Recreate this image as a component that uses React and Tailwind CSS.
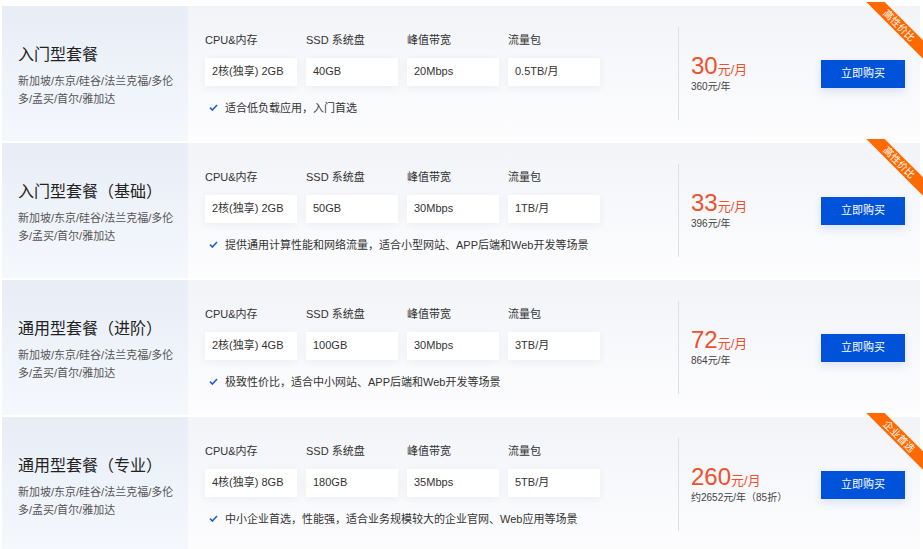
const plans = [
  {
    name: '入门型套餐',
    specs: ['2核(独享) 2GB', '40GB', '20Mbps', '0.5TB/月'],
    note: '适合低负载应用，入门首选',
    price: '30',
    year: '360元/年',
    tag: '高性价比',
  },
  {
    name: '入门型套餐（基础）',
    specs: ['2核(独享) 2GB', '50GB', '30Mbps', '1TB/月'],
    note: '提供通用计算性能和网络流量，适合小型网站、APP后端和Web开发等场景',
    price: '33',
    year: '396元/年',
    tag: '高性价比',
  },
  {
    name: '通用型套餐（进阶）',
    specs: ['2核(独享) 4GB', '100GB', '30Mbps', '3TB/月'],
    note: '极致性价比，适合中小网站、APP后端和Web开发等场景',
    price: '72',
    year: '864元/年',
  },
  {
    name: '通用型套餐（专业）',
    specs: ['4核(独享) 8GB', '180GB', '35Mbps', '5TB/月'],
    note: '中小企业首选，性能强，适合业务规模较大的企业官网、Web应用等场景',
    price: '260',
    year: '约2652元/年（85折）',
    tag: '企业首选',
  },
]

const labels = ['CPU&内存', 'SSD 系统盘', '峰值带宽', '流量包']

const Check = () => (
  <svg width="9" height="7" viewBox="0 0 9 7" className="shrink-0">
    <path d="M1 3.6 L3.4 6 L8 1" fill="none" stroke="#1a5fd8" strokeWidth="1.6" />
  </svg>
)

const PlanCard = ({ plan }) => (
  <div className="relative flex h-[135px] w-[918px] ml-[2px] bg-gradient-to-b from-[#f2f4f8] to-[#fdfdfe]">
    {/* Left: name + regions */}
    <div className="flex w-[186px] shrink-0 flex-col justify-center pl-[16px] pt-[4px] bg-gradient-to-b from-[#e8edf6] to-[#f5f8fd]">
      <div className="text-[16px] leading-[22px] text-[#222]">{plan.name}</div>
      <div className="mt-[6px] text-[11px] leading-[18px] text-[#555]">
        新加坡/东京/硅谷/法兰克福/多伦
        <br />
        多/孟买/首尔/雅加达
      </div>
    </div>

    {/* Middle: specs */}
    <div className="flex w-[490px] shrink-0 flex-col justify-center pl-[17px]">
      <div className="flex gap-[9px]">
        {labels.map((l, i) => (
          <div key={l} className="w-[92px]">
            <div className="text-[11px] leading-[16px] text-[#333]">{l}</div>
            <div className="mt-[10px] flex h-[28px] items-center bg-white pl-[7px] text-[11px] text-[#333] shadow-[0_2px_8px_rgba(30,50,90,0.06)]">
              {plan.specs[i]}
            </div>
          </div>
        ))}
      </div>
      <div className="mt-[14px] flex items-center gap-[7px] pl-[4px] text-[11px] leading-[16px] text-[#333]">
        <Check />
        <span>{plan.note}</span>
      </div>
    </div>

    {/* Divider */}
    <div className="my-auto h-[93px] w-px bg-[#dcdfe4]" />

    {/* Price + button */}
    <div className="flex flex-1 items-center justify-between pl-[12px] pr-[15px]">
      <div>
        <div className="flex items-baseline text-[#f0502c]">
          <span className="text-[24px] leading-[26px]">{plan.price}</span>
          <span className="text-[13px]">元/月</span>
        </div>
        <div className="mt-[1px] text-[10px] leading-[14px] text-[#444]">{plan.year}</div>
      </div>
      <button className="h-[28px] w-[84px] bg-[#0052d9] text-[11px] text-white shadow-[0_4px_10px_rgba(0,60,180,0.12)]">
        立即购买
      </button>
    </div>

    {plan.tag && (
      <div className="absolute right-[-3px] top-[-4px] h-[57px] w-[57px] overflow-hidden">
        <div className="absolute left-[-7px] top-[17px] flex h-[13px] w-[80px] rotate-45 items-center justify-center bg-[#ff6a00] text-[10px] leading-none text-white">
          {plan.tag}
        </div>
      </div>
    )}
  </div>
)

export default function App() {
  return (
    <div
      className="flex min-h-[549px] w-[923px] flex-col gap-[2px] bg-white pt-[6px]"
      style={{ fontFamily: '"Liberation Sans", "Noto Sans CJK SC", sans-serif' }}
    >
      {plans.map((p) => (
        <PlanCard key={p.name} plan={p} />
      ))}
    </div>
  )
}
